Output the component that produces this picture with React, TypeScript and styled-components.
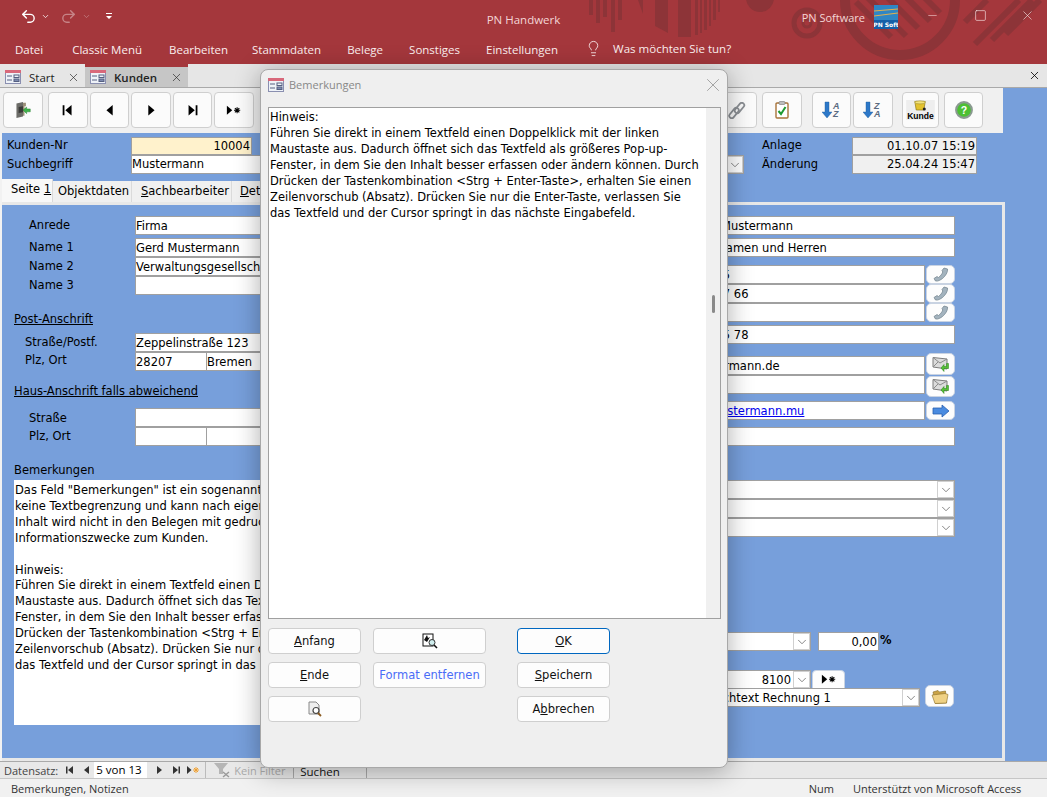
import React from "react";
import styled, { createGlobalStyle } from "styled-components";
import { Undo2, Redo2, ChevronDown, Lightbulb, X, Minus, Square } from "lucide-react";

const FORM_FONT = `"DejaVu Sans", Verdana, sans-serif`;
const UI_FONT = `"Open Sans", "Noto Sans", sans-serif`;

const Global = createGlobalStyle`
  html, body { margin: 0; padding: 0; height: 100%; overflow: hidden; background: #f0f0f0; }
  #root { height: 100%; }
  * { box-sizing: border-box; }
`;

const Page = styled.div`
  position: relative;
  width: 1047px;
  height: 797px;
  display: flex;
  flex-direction: column;
  overflow: hidden;
  font-family: ${FORM_FONT};
  font-size: 11.5px;
  color: #000;
`;

const Ribbon = styled.header`
  position: relative;
  height: 64px;
  flex: none;
  background: #a4373c;
  color: #fff;
  font-family: ${UI_FONT};
  overflow: hidden;
`;
const Decor = styled.svg`
  position: absolute;
  left: 0;
  top: 0;
`;
const TitleRow = styled.div`
  position: relative;
  height: 38px;
  display: grid;
  grid-template-columns: 1fr auto 1fr;
  align-items: center;
`;
const Qat = styled.div`
  display: flex;
  align-items: center;
  padding: 0 0 6px 20px;
`;
const QatBtn = styled.span<{ $w: number; $dim?: boolean }>`
  width: ${(p) => p.$w}px;
  display: flex;
  align-items: center;
  opacity: ${(p) => (p.$dim ? 0.38 : 1)};
`;
const AppTitle = styled.div`
  font-size: 11.5px;
  color: #f3d6d6;
  padding-top: 1px;
`;
const WinGroup = styled.div`
  display: flex;
  align-items: center;
  justify-content: flex-end;
  padding-bottom: 6px;
`;
const Owner = styled.span`
  font-size: 11px;
  color: #f3d6d6;
  margin: 2px 9px 0 0;
`;
const LogoWrap = styled.span`
  display: flex;
  margin-top: 2px;
`;
const WinBtn = styled.span<{ $ml: number }>`
  display: flex;
  margin-left: ${(p) => p.$ml}px;
  padding-bottom: 2px;
  color: #f8e4e4;
`;
const MenuRow = styled.nav`
  position: relative;
  height: 26px;
  display: flex;
  align-items: center;
  padding: 0 0 3px 15px;
  font-size: 11.5px;
`;
const MenuItem = styled.span<{ $ml: number }>`
  margin-left: ${(p) => p.$ml}px;
  color: #fbeeee;
`;
const TellMe = styled.span`
  display: flex;
  align-items: center;
  gap: 11px;
  margin-left: 27px;
  color: #fbeeee;
  margin-top: -2px;
`;

const TabStrip = styled.div`
  height: 24px;
  flex: none;
  display: flex;
  background: #e6e6e6;
  border-bottom: 1px solid #a9a9a9;
  font-family: ${UI_FONT};
  font-size: 11.5px;
`;
const DocTab = styled.div<{ $active?: boolean; $w: number }>`
  width: ${(p) => p.$w}px;
  display: flex;
  align-items: center;
  background: ${(p) => (p.$active ? "#c6c6c6" : "transparent")};
  border-top: 3px solid ${(p) => (p.$active ? "#a4373c" : "transparent")};
  padding: 0 5px 0 5px;
  font-weight: ${(p) => (p.$active ? 600 : 400)};
  color: #222;
  flex: none;
`;
const DocTabLabel = styled.span`
  margin-left: 8px;
  flex: 1;
`;
const StripClose = styled.span`
  margin-left: auto;
  display: flex;
  align-items: center;
  padding-right: 6px;
`;

const Toolbar = styled.div`
  height: 45px;
  flex: none;
  display: flex;
  align-items: flex-start;
  padding: 4px 20px 0 3px;
  background: #f0f0f0;
  position: relative;
`;
const ToolbarWrap = styled.div`
  flex: none;
  background: #779fdb;
  padding-right: 44px;
`;
const ToolButton = styled.div<{ $w: number; $ml: number }>`
  width: ${(p) => p.$w}px;
  height: 36px;
  margin-left: ${(p) => p.$ml}px;
  flex: none;
  display: flex;
  align-items: center;
  justify-content: center;
  background: #fbfbfb;
  border: 1px solid #cfcfcf;
  border-radius: 4px;
`;
const ToolSpacer = styled.div`
  flex: 1;
`;

const Workspace = styled.main`
  flex: 1;
  min-height: 0;
  display: flex;
  flex-direction: column;
  background: #779fdb;
  border-left: 2px solid #f2f2f2;
`;
const HeaderForm = styled.div`
  height: 46px;
  flex: none;
  display: flex;
  padding: 4px 0 0 5px;
`;
const HeaderLeft = styled.div`
  width: 755px;
`;
const HeaderRight = styled.div`
  width: 215px;
`;
const HeaderRow = styled.div<{ $h: number }>`
  display: flex;
  height: ${(p) => p.$h}px;
  align-items: stretch;
`;
const HeaderLabel = styled.div<{ $w: number; $pt: number }>`
  width: ${(p) => p.$w}px;
  flex: none;
  line-height: 15px;
  padding-top: ${(p) => p.$pt}px;
`;
const Box = styled.div<{
  $bg?: string;
  $right?: boolean;
  $w?: number;
  $indent?: number;
  $noLeft?: boolean;
  $ml?: number;
  $pr?: number;
}>`
  position: relative;
  ${(p) => (p.$w ? `width:${p.$w}px;flex:none;` : "flex:1;min-width:0;")}
  margin-left: ${(p) => p.$ml ?? 0}px;
  background: ${(p) => p.$bg ?? "#fff"};
  border: 1px solid #a0a0a0;
  ${(p) => (p.$noLeft ? "border-left:0;" : "")}
  line-height: 18px;
  padding: 0 ${(p) => p.$pr ?? 1}px 0 ${(p) => p.$indent ?? 0}px;
  text-align: ${(p) => (p.$right ? "right" : "left")};
  white-space: nowrap;
  overflow: hidden;
`;
const HeaderBox = styled(Box)`
  line-height: 16px;
`;
const Chevron = styled.span<{ $w?: number }>`
  position: absolute;
  right: 0;
  top: 0;
  bottom: 0;
  width: ${(p) => p.$w ?? 17}px;
  background: #fff;
  border: 1px solid #d0d0d0;
  display: flex;
  align-items: center;
  justify-content: center;
  color: #555;
`;

const TabBar = styled.div`
  height: 23px;
  flex: none;
  display: flex;
  align-items: flex-end;
`;
const FormTab = styled.div<{ $w: number; $active?: boolean; $pad?: number }>`
  width: ${(p) => p.$w}px;
  height: ${(p) => (p.$active ? 23 : 21)}px;
  background: ${(p) => (p.$active ? "#f8f8f8" : "#f0f0f0")};
  border-right: 1px solid #dadada;
  padding: 3px 0 0 ${(p) => p.$pad ?? 5}px;
  line-height: 15px;
  white-space: nowrap;
  overflow: hidden;
  flex: none;
`;
const TabPanel = styled.section`
  flex: 1;
  min-height: 0;
  margin-right: 42px;
  border: 3px solid #e8e8e8;
  border-left: 0;
  display: flex;
  padding-left: 12px;
  overflow: hidden;
`;
const LeftCol = styled.div`
  width: 466px;
  flex: none;
`;
const RightCol = styled.div`
  width: 315px;
  margin-left: 160px;
  flex: none;
`;
const Row = styled.div<{ $mt?: number; $h?: number }>`
  display: flex;
  align-items: stretch;
  margin-top: ${(p) => p.$mt ?? 0}px;
  height: ${(p) => p.$h ?? 19}px;
`;
const FieldLabel = styled.div<{ $indent: number; $pt?: number }>`
  width: 121px;
  flex: none;
  padding-left: ${(p) => p.$indent}px;
  padding-top: ${(p) => p.$pt ?? 1}px;
  line-height: 16px;
`;
const Heading = styled.div<{ $mt: number; $u?: boolean }>`
  height: 16px;
  line-height: 18px;
  margin-top: ${(p) => p.$mt}px;
  text-decoration: ${(p) => (p.$u ? "underline" : "none")};
`;
const NoteBox = styled.div`
  margin-top: 3px;
  height: 245px;
  background: #fff;
  padding: 3px 0 0 1px;
  line-height: 15.9px;
  white-space: pre;
  overflow: hidden;
`;
const IconBtn = styled.div<{ $w?: number; $ml?: number; $top?: boolean; $mt?: number; $mb?: number }>`
  width: ${(p) => p.$w ?? 29}px;
  margin: ${(p) => p.$mt ?? 0}px 0 ${(p) => p.$mb ?? 0}px ${(p) => p.$ml ?? 1}px;
  flex: none;
  background: #fdfdfd;
  border: 1px solid #c9d3e2;
  border-radius: ${(p) => (p.$top ? "4px 4px 0 0" : "5px")};
  display: flex;
  align-items: center;
  justify-content: center;
`;
const Percent = styled.span`
  margin-left: 1px;
  font-weight: 700;
  line-height: 16px;
`;
const LinkText = styled.span`
  color: #0000ee;
  text-decoration: underline;
`;

const NavBar = styled.div`
  height: 17px;
  flex: none;
  display: flex;
  align-items: center;
  background: #e8e8e8;
  border-top: 1px solid #a9a9a9;
  font-family: ${UI_FONT};
  font-size: 11px;
  padding-left: 4px;
  color: #444;
`;
const NavIcon = styled.span<{ $ml: number }>`
  margin-left: ${(p) => p.$ml}px;
  display: flex;
`;
const NavInput = styled.span`
  width: 53px;
  height: 16px;
  margin-left: 1px;
  background: #fff;
  color: #000;
  padding-left: 2px;
  font-size: 11.5px;
  line-height: 16px;
  flex: none;
`;
const FilterCell = styled.span`
  margin-left: 6px;
  width: 88px;
  padding-left: 7px;
  height: 100%;
  display: flex;
  align-items: center;
  gap: 1px;
  border-left: 1px solid #bbb;
  color: #aaa;
  flex: none;
  white-space: nowrap;
`;
const SearchCell = styled.span`
  width: 74px;
  height: 100%;
  padding-left: 6px;
  border-left: 1px solid #a9a9a9;
  border-right: 1px solid #a9a9a9;
  color: #111;
  font-size: 11.5px;
  flex: none;
  line-height: 19px;
  overflow: hidden;
`;
const StatusBar = styled.footer`
  height: 19px;
  flex: none;
  display: flex;
  align-items: center;
  background: #f1f1f1;
  border-top: 1px solid #c6c6c6;
  padding: 0 0 0 11px;
  font-family: ${UI_FONT};
  font-size: 11px;
  color: #333;
`;
const StatusRight = styled.span<{ $ml: number }>`
  margin-left: ${(p) => p.$ml}px;
`;

const Dialog = styled.div`
  position: absolute;
  left: 260px;
  top: 69px;
  width: 468px;
  height: 699px;
  background: #efefef;
  border: 1px solid #a8a8a8;
  border-radius: 8px;
  box-shadow: 0 3px 26px rgba(0, 0, 0, 0.32);
  display: flex;
  flex-direction: column;
  padding: 0 6px 0 7px;
`;
const DialogTitle = styled.div`
  height: 37px;
  flex: none;
  display: flex;
  align-items: center;
  gap: 5px;
  padding: 0 0 8px 0;
  font-family: ${UI_FONT};
  font-size: 11px;
  color: #888;
`;
const DialogClose = styled.span`
  margin-left: auto;
  margin-right: -3px;
  display: flex;
  color: #888;
`;
const TextArea = styled.div`
  position: relative;
  height: 512px;
  flex: none;
  background: #fff;
  border: 1px solid #a0a0a0;
  padding: 1px 16px 0 1px;
  line-height: 16px;
`;
const Track = styled.span`
  position: absolute;
  right: 0;
  top: 0;
  bottom: 0;
  width: 14px;
  background: #f0f0f0;
`;
const Thumb = styled.span`
  position: absolute;
  right: 5px;
  top: 187px;
  width: 3px;
  height: 18px;
  border-radius: 2px;
  background: #8a8a8a;
`;
const DialogButtons = styled.div`
  margin-top: 9px;
  display: grid;
  grid-template-columns: 93px 113px 93px;
  grid-auto-rows: 26px;
  column-gap: 12px;
  row-gap: 8px;
`;
const DButton = styled.div<{ $col: number; $primary?: boolean; $blue?: boolean }>`
  grid-column: ${(p) => p.$col};
  ${(p) => (p.$col === 3 ? "margin-left:19px;width:93px;" : "")}
  background: #fdfdfd;
  border: 1px solid ${(p) => (p.$primary ? "#0067c0" : "#cfcfcf")};
  border-radius: 4px;
  display: flex;
  align-items: center;
  justify-content: center;
  color: ${(p) => (p.$blue ? "#4a6cf7" : "#111")};
`;

const DialogBody = styled.div`
  white-space: pre-wrap;
`;

const FormIcon = () => (
  <svg width="16" height="16" viewBox="0 0 16 16">
    <rect x="0.5" y="1.5" width="15" height="13" fill="#eef2f8" stroke="#8a8fb0" />
    <rect x="0" y="1" width="16" height="3" fill="#d8687a" />
    <path d="M2 7h5M2 11h5" stroke="#555f80" strokeWidth="1" />
    <rect x="9" y="6" width="5" height="2.5" fill="none" stroke="#555f80" />
    <rect x="9" y="10" width="5" height="2.5" fill="#7d8bb0" stroke="#555f80" />
  </svg>
);
const Glyph = ({ kind }: { kind: "first" | "prev" | "next" | "last" | "new" }) => (
  <svg width="16" height="12.5" viewBox="0 0 18 14">
    {kind === "first" && <path d="M3 1.5h2v11H3zM13 1v12L6 7z" fill="#000" />}
    {kind === "prev" && <path d="M12 1v12L5 7z" fill="#000" />}
    {kind === "next" && <path d="M6 1v12l7-6z" fill="#000" />}
    {kind === "last" && <path d="M4 1v12l7-6zM12 1.5h2v11h-2z" fill="#000" />}
    {kind === "new" && (
      <>
        <path d="M1 2v10l6-5z" fill="#000" />
        <path d="M9 7h7M12.5 3.5v7M10 4.5l5 5M15 4.5l-5 5" stroke="#000" strokeWidth="1.2" />
      </>
    )}
  </svg>
);
const ExitIcon = () => (
  <svg width="16" height="18" viewBox="0 0 22 24">
    <path d="M2 3l9-2v20l-9 2z" fill="#6c6c68" />
    <path d="M11 2h4v5h-2v13h-2z" fill="#9a8f78" />
    <path d="M5 8l6-1v8l-6 1z" fill="#3a3a38" />
    <path d="M11 12l5-4v2.5h5v4h-5V17z" fill="#3fb34a" stroke="#207a2b" strokeWidth=".6" />
  </svg>
);
const ClipIcon = () => (
  <svg width="18" height="17" viewBox="0 0 18 17">
    <g fill="none" stroke="#8b8f94" strokeWidth="1.8">
      <rect x="-6" y="-2.4" width="12" height="4.8" rx="2.4" transform="translate(6 11) rotate(-50)" />
      <rect x="-6" y="-2.4" width="12" height="4.8" rx="2.4" transform="translate(11.5 6) rotate(-50)" />
    </g>
  </svg>
);
const ClipboardIcon = () => (
  <svg width="14" height="18" viewBox="0 0 14 18">
    <rect x="1" y="2" width="12" height="15" rx="1" fill="#fff" stroke="#a8743a" strokeWidth="1.4" />
    <rect x="4" y="0.5" width="6" height="3" rx="1" fill="#bdbdbd" stroke="#777" strokeWidth=".6" />
    <path d="M3.5 10l2.5 3 4.5-7" fill="none" stroke="#1f9a32" strokeWidth="2" />
  </svg>
);
const SortIcon = ({ top, bottom }: { top: string; bottom: string }) => (
  <svg width="20" height="18" viewBox="0 0 20 18">
    <path d="M3 1h4v10h3l-5 6-5-6h3z" fill="#2d78c8" stroke="#1a5aa0" strokeWidth=".4" />
    <text x="11" y="8" fontFamily="Liberation Sans, sans-serif" fontSize="9" fontWeight="700" fontStyle="italic" fill="#5a6a80">{top}</text>
    <text x="11" y="15.5" fontFamily="Liberation Sans, sans-serif" fontSize="9" fontWeight="700" fontStyle="italic" fill="#5a6a80">{bottom}</text>
  </svg>
);
const KundeIcon = () => (
  <svg width="29" height="20" viewBox="0 0 30 21">
    <rect width="30" height="21" fill="#eeeeee" />
    <path d="M9 1.5h11l-1.5 9h-8z" fill="#e3c22e" stroke="#8a7410" strokeWidth=".7" />
    <ellipse cx="14.5" cy="2.5" rx="5.5" ry="1.6" fill="#f2e27a" stroke="#8a7410" strokeWidth=".5" />
    <circle cx="19" cy="9.5" r="1.6" fill="#222" />
    <text x="15" y="19.5" textAnchor="middle" fontFamily="Liberation Sans, sans-serif" fontSize="9" fontWeight="700" fill="#000">Kunde</text>
  </svg>
);
const HelpIcon = () => (
  <svg width="18" height="18" viewBox="0 0 24 24">
    <circle cx="12" cy="12" r="10.5" fill="#4cc033" stroke="#8a9a90" strokeWidth="2.8" />
    <text x="12" y="17" textAnchor="middle" fontFamily="Liberation Sans, sans-serif" fontSize="14" fontWeight="700" fill="#fff">?</text>
  </svg>
);
const PhoneIcon = () => (
  <svg width="16" height="15" viewBox="0 0 16 15">
    <path
      d="M11 1l3.500 1c.5 3-2 7-5 9.500C7.500 13 5 14.500 2.500 14L1 11.500l3-2 1.500 1C7.500 9 9 7 9.800 5L9 3.500z"
      fill="#a3b3be"
      stroke="#6f7f8a"
      strokeWidth=".7"
    />
  </svg>
);
const MailIcon = () => (
  <svg width="18" height="17" viewBox="0 0 18 17">
    <path d="M1 1.5l14 1.5v10L1 11z" fill="#dcdcdc" stroke="#7c7c7c" />
    <path d="M1 1.5l7 5.500 7-4M1 11l5-5" fill="none" stroke="#8c8c8c" />
    <path d="M9 12l3-3.500v2h2.500V7.500h2v5h-4.500v3z" fill="#55c136" stroke="#2a7e1a" strokeWidth=".5" />
  </svg>
);
const ArrowIcon = () => (
  <svg width="18" height="14" viewBox="0 0 18 14">
    <path d="M1 4h9V1l7 6-7 6v-3H1z" fill="#4a8be0" stroke="#2a5fae" strokeWidth=".8" />
  </svg>
);
const FolderIcon = () => (
  <svg width="18" height="15" viewBox="0 0 18 15">
    <path d="M2 3l5-1.500 1.500 1.500 6-1 1 12-11 .5z" fill="#c9a347" stroke="#8a6d26" strokeWidth=".6" />
    <path d="M1 6l13-1.500 3 1L15.500 14 4 14.500z" fill="#efd184" stroke="#8a6d26" strokeWidth=".6" />
  </svg>
);
const LensPage = () => (
  <svg width="16" height="16" viewBox="0 0 16 16">
    <path d="M2 1h7l3 3v9H2z" fill="#eee" stroke="#888" />
    <circle cx="9" cy="9.5" r="3" fill="#fff" stroke="#444" strokeWidth="1.2" />
    <path d="M11 12l3 3" stroke="#8a5a20" strokeWidth="1.8" />
  </svg>
);
const ZoomBlack = () => (
  <svg width="16" height="16" viewBox="0 0 16 16">
    <rect x="1" y="1" width="10" height="12" fill="#fff" stroke="#111" />
    <path d="M2 7l3-5 1 3 2-1-3 5z" fill="#111" />
    <circle cx="10" cy="9.5" r="3" fill="#cfeeee" stroke="#333" />
    <path d="M12 12l3 3" stroke="#111" strokeWidth="1.6" />
  </svg>
);
const Logo = () => (
  <svg width="24" height="24" viewBox="0 0 24 24">
    <rect width="24" height="24" fill="#1660a8" />
    <rect width="24" height="15" fill="#2f86c4" />
    <path d="M0 6l24-2M0 11l24-3" stroke="#e0b050" strokeWidth="1.2" />
    <text x="12" y="22" textAnchor="middle" fontFamily="DejaVu Sans, sans-serif" fontSize="6" fontWeight="700" fill="#fff">PN Soft</text>
  </svg>
);
const TinyNav = ({ kind }: { kind: "first" | "prev" | "next" | "last" | "new" }) => (
  <svg width="12" height="10" viewBox="0 0 12 10">
    {kind === "first" && <path d="M2 1.5h1.500v7H2zM9 1v8L4 5z" fill="#333" />}
    {kind === "prev" && <path d="M8 1v8L3 5z" fill="#333" />}
    {kind === "next" && <path d="M4 1v8l5-4z" fill="#333" />}
    {kind === "last" && <path d="M3 1v8l5-4zM8.5 1.5H10v7H8.500z" fill="#333" />}
    {kind === "new" && (
      <>
        <path d="M0 1v8l4.500-4z" fill="#333" />
        <path d="M6 5h6M9 2v6M7 3l4 4M11 3L7 7" stroke="#f0a030" strokeWidth="1" />
      </>
    )}
  </svg>
);
const FilterIcon = () => (
  <svg width="20" height="16" viewBox="0 0 20 16">
    <path d="M1 1h14l-5 6v5H6V7z" fill="#b5b5b5" />
    <path d="M10 10l6 5M16 10l-6 5" stroke="#999" strokeWidth="1.4" />
  </svg>
);
const DownChevron = () => <ChevronDown size={14} strokeWidth={1.2} />;
const TinyChevron = () => <ChevronDown size={9} strokeWidth={2} />;

const Decoration = () => (
  <Decor width="1047" height="64" viewBox="0 0 1047 64">
    <g fill="#8d3438">
      <rect x="589" y="0" width="4" height="15" />
      <rect x="596" y="0" width="4" height="23" />
      <rect x="603" y="0" width="4" height="17" />
      <rect x="611" y="0" width="4" height="32" />
      <rect x="618" y="0" width="4" height="20" />
      <path d="M638 0h5v14zM655 0h13v33l-13-7z" />
      <rect x="678" y="0" width="13" height="37" />
      <rect x="695" y="0" width="3" height="35" />
      <rect x="700" y="0" width="2" height="33" />
      <rect x="704" y="0" width="3" height="30" />
      <rect x="709" y="0" width="2" height="26" />
      <rect x="713" y="0" width="3" height="20" />
      <rect x="718" y="0" width="2" height="12" />
      <circle cx="760" cy="-2" r="14" />
    </g>
    <g fill="none" stroke="#8d3438">
      <circle cx="807" cy="23" r="13" strokeWidth="5" />
      <circle cx="807" cy="23" r="4" strokeWidth="3" />
      <circle cx="900" cy="0" r="55" strokeWidth="10" />
      <path d="M856 2l35 35M868 -2l38 38M888 -2l30 30M905 -4l25 25M925 -2l15 15" strokeWidth="6" />
      <path d="M975 44l44-44M992 40l40-40M965 22l22-22M1006 34l34-34" strokeWidth="6" />
    </g>
  </Decor>
);

const noteText = `Das Feld "Bemerkungen" ist ein sogenanntes Memofeld. Es hat
keine Textbegrenzung und kann nach eigenen Wünschen gefüllt
Inhalt wird nicht in den Belegen mit gedruckt und dient nur
Informationszwecke zum Kunden.

Hinweis:
Führen Sie direkt in einem Textfeld einen Doppelklick mit der linken
Maustaste aus. Dadurch öffnet sich das Textfeld als größeres Pop-up-
Fenster, in dem Sie den Inhalt besser erfassen oder ändern können.
Drücken der Tastenkombination <Strg + Enter-Taste>, erhalten Sie einen
Zeilenvorschub (Absatz). Drücken Sie nur die Enter-Taste, verlassen Sie
das Textfeld und der Cursor springt in das nächste Eingabefeld.`;

const dialogText = `Hinweis:
Führen Sie direkt in einem Textfeld einen Doppelklick mit der linken Maustaste aus. Dadurch öffnet sich das Textfeld als größeres Pop-up-Fenster, in dem Sie den Inhalt besser erfassen oder ändern können. Durch Drücken der Tastenkombination <Strg + Enter-Taste>, erhalten Sie einen Zeilenvorschub (Absatz). Drücken Sie nur die Enter-Taste, verlassen Sie das Textfeld und der Cursor springt in das nächste Eingabefeld.`;

export default function App() {
  return (
    <Page>
      <Global />
      <Ribbon>
        <Decoration />
        <TitleRow>
          <Qat>
            <QatBtn $w={21}><Undo2 size={17} strokeWidth={2} /></QatBtn>
            <QatBtn $w={19}><TinyChevron /></QatBtn>
            <QatBtn $w={22} $dim><Redo2 size={17} strokeWidth={2} /></QatBtn>
            <QatBtn $w={23} $dim><TinyChevron /></QatBtn>
            <QatBtn $w={10}>
              <svg width="8" height="8" viewBox="0 0 8 8"><path d="M1 1h6v1H1zM1 4h6L4 7z" fill="#fff" /></svg>
            </QatBtn>
          </Qat>
          <AppTitle>PN Handwerk</AppTitle>
          <WinGroup>
            <Owner>PN Software</Owner>
            <LogoWrap><Logo /></LogoWrap>
            <WinBtn $ml={28}><Minus size={13} strokeWidth={1} /></WinBtn>
            <WinBtn $ml={35}><Square size={13} strokeWidth={1.2} /></WinBtn>
            <WinBtn $ml={33}><X size={15} strokeWidth={1} /></WinBtn>
            <WinBtn $ml={12} />
          </WinGroup>
        </TitleRow>
        <MenuRow>
          <MenuItem $ml={0}>Datei</MenuItem>
          <MenuItem $ml={29}>Classic Menü</MenuItem>
          <MenuItem $ml={27}>Bearbeiten</MenuItem>
          <MenuItem $ml={24}>Stammdaten</MenuItem>
          <MenuItem $ml={26}>Belege</MenuItem>
          <MenuItem $ml={26}>Sonstiges</MenuItem>
          <MenuItem $ml={26}>Einstellungen</MenuItem>
          <TellMe><Lightbulb size={17} strokeWidth={1.2} />Was möchten Sie tun?</TellMe>
        </MenuRow>
      </Ribbon>
      <TabStrip>
        <DocTab $w={85}>
          <FormIcon />
          <DocTabLabel>Start</DocTabLabel>
          <X size={13} strokeWidth={1.2} />
        </DocTab>
        <DocTab $w={103} $active>
          <FormIcon />
          <DocTabLabel>Kunden</DocTabLabel>
          <X size={13} strokeWidth={1.2} />
        </DocTab>
        <StripClose><X size={13} strokeWidth={1.5} /></StripClose>
      </TabStrip>
      <ToolbarWrap>
        <Toolbar>
          <ToolButton $w={40} $ml={0}><ExitIcon /></ToolButton>
          <ToolButton $w={40} $ml={5}><Glyph kind="first" /></ToolButton>
          <ToolButton $w={39} $ml={2}><Glyph kind="prev" /></ToolButton>
          <ToolButton $w={40} $ml={2}><Glyph kind="next" /></ToolButton>
          <ToolButton $w={39} $ml={2}><Glyph kind="last" /></ToolButton>
          <ToolButton $w={40} $ml={2}><Glyph kind="new" /></ToolButton>
          <ToolSpacer />
          <ToolButton $w={40} $ml={0}><ClipIcon /></ToolButton>
          <ToolButton $w={40} $ml={5}><ClipboardIcon /></ToolButton>
          <ToolButton $w={39} $ml={10}><SortIcon top="A" bottom="Z" /></ToolButton>
          <ToolButton $w={40} $ml={2}><SortIcon top="Z" bottom="A" /></ToolButton>
          <ToolButton $w={37} $ml={9}><KundeIcon /></ToolButton>
          <ToolButton $w={39} $ml={5}><HelpIcon /></ToolButton>
        </Toolbar>
      </ToolbarWrap>
      <Workspace>
        <HeaderForm>
          <HeaderLeft>
            <HeaderRow $h={18}>
              <HeaderLabel $w={124} $pt={1}>Kunden-Nr</HeaderLabel>
              <HeaderBox $w={121} $bg="#fff2cc" $right>10004</HeaderBox>
            </HeaderRow>
            <HeaderRow $h={19}>
              <HeaderLabel $w={124} $pt={2}>Suchbegriff</HeaderLabel>
              <HeaderBox $w={613}>Mustermann<Chevron><DownChevron /></Chevron></HeaderBox>
            </HeaderRow>
          </HeaderLeft>
          <HeaderRight>
            <HeaderRow $h={18}>
              <HeaderLabel $w={90} $pt={1}>Anlage</HeaderLabel>
              <HeaderBox $w={125} $bg="#f0f0f0" $right>01.10.07 15:19</HeaderBox>
            </HeaderRow>
            <HeaderRow $h={19}>
              <HeaderLabel $w={90} $pt={2}>Änderung</HeaderLabel>
              <HeaderBox $w={125} $bg="#f0f0f0" $right>25.04.24 15:47</HeaderBox>
            </HeaderRow>
          </HeaderRight>
        </HeaderForm>
        <TabBar>
          <FormTab $w={51} $active $pad={9}>Seite <u>1</u></FormTab>
          <FormTab $w={79}>Objektdaten</FormTab>
          <FormTab $w={100} $pad={9}><u>S</u>achbearbeiter</FormTab>
          <FormTab $w={80} $pad={8}><u>D</u>etails</FormTab>
        </TabBar>
        <TabPanel>
          <LeftCol>
            <Row $mt={11}><FieldLabel $indent={15}>Anrede</FieldLabel><Box>Firma</Box></Row>
            <Row $mt={3}><FieldLabel $indent={15}>Name 1</FieldLabel><Box>Gerd Mustermann</Box></Row>
            <Row><FieldLabel $indent={15}>Name 2</FieldLabel><Box>Verwaltungsgesellschaft</Box></Row>
            <Row><FieldLabel $indent={15}>Name 3</FieldLabel><Box /></Row>
            <Heading $mt={15} $u>Post-Anschrift</Heading>
            <Row $mt={7}><FieldLabel $indent={11}>Straße/Postf.</FieldLabel><Box>Zeppelinstraße 123</Box></Row>
            <Row>
              <FieldLabel $indent={11} $pt={0}>Plz, Ort</FieldLabel>
              <Box $w={72}>28207</Box>
              <Box $noLeft>Bremen</Box>
            </Row>
            <Heading $mt={11} $u>Haus-Anschrift falls abweichend</Heading>
            <Row $mt={10}><FieldLabel $indent={15} $pt={2}>Straße</FieldLabel><Box /></Row>
            <Row><FieldLabel $indent={15}>Plz, Ort</FieldLabel><Box $w={72} /><Box $noLeft /></Row>
            <Heading $mt={15}>Bemerkungen</Heading>
            <NoteBox>{noteText}</NoteBox>
          </LeftCol>
          <RightCol>
            <Row $mt={11}><Box $indent={80}>Mustermann</Box></Row>
            <Row $mt={3}><Box $indent={76}>Damen und Herren</Box></Row>
            <Row $mt={8}><Box $indent={16}>0421 123 45</Box><IconBtn><PhoneIcon /></IconBtn></Row>
            <Row><Box $indent={16}>0421 123 47 66</Box><IconBtn><PhoneIcon /></IconBtn></Row>
            <Row><Box /><IconBtn><PhoneIcon /></IconBtn></Row>
            <Row $mt={3}><Box $indent={16}>0421 123 45 78</Box></Row>
            <Row $mt={12}><Box $indent={14}>info@mustermann.de</Box><IconBtn $mt={-3}><MailIcon /></IconBtn></Row>
            <Row><Box /><IconBtn $mt={1} $mb={-3}><MailIcon /></IconBtn></Row>
            <Row $mt={7}><Box $indent={37}><LinkText>www.mustermann.mu</LinkText></Box><IconBtn><ArrowIcon /></IconBtn></Row>
            <Row $mt={7}><Box /></Row>
            <Row $mt={34}><Box><Chevron><DownChevron /></Chevron></Box></Row>
            <Row><Box><Chevron><DownChevron /></Chevron></Box></Row>
            <Row><Box><Chevron><DownChevron /></Chevron></Box></Row>
            <Row $mt={95}>
              <Box $w={171}><Chevron><DownChevron /></Chevron></Box>
              <Box $w={61} $right $ml={7}>0,00</Box>
              <Percent>%</Percent>
            </Row>
            <Row $mt={19}>
              <Box $w={171} $right $pr={19}>8100<Chevron><DownChevron /></Chevron></Box>
              <IconBtn $w={33} $top><Glyph kind="new" /></IconBtn>
            </Row>
            <Row $mt={-1}>
              <Box $w={280} $indent={66}>Nachtext Rechnung 1<Chevron><DownChevron /></Chevron></Box>
              <IconBtn $ml={5} $mt={-3}><FolderIcon /></IconBtn>
            </Row>
          </RightCol>
        </TabPanel>
      </Workspace>
      <NavBar>
        Datensatz:
        <NavIcon $ml={6}><TinyNav kind="first" /></NavIcon>
        <NavIcon $ml={5}><TinyNav kind="prev" /></NavIcon>
        <NavInput>5 von 13</NavInput>
        <NavIcon $ml={6}><TinyNav kind="next" /></NavIcon>
        <NavIcon $ml={5}><TinyNav kind="last" /></NavIcon>
        <NavIcon $ml={5}><TinyNav kind="new" /></NavIcon>
        <FilterCell><FilterIcon />Kein Filter</FilterCell>
        <SearchCell>Suchen</SearchCell>
      </NavBar>
      <StatusBar>
        Bemerkungen, Notizen
        <StatusRight $ml={680}>Num</StatusRight>
        <StatusRight $ml={19}>Unterstützt von Microsoft Access</StatusRight>
      </StatusBar>
      <Dialog>
        <DialogTitle>
          <FormIcon />
          Bemerkungen
          <DialogClose><X size={22} strokeWidth={0.8} /></DialogClose>
        </DialogTitle>
        <TextArea>
          <DialogBody>{dialogText}</DialogBody>
          <Track><Thumb /></Track>
        </TextArea>
        <DialogButtons>
          <DButton $col={1}><span><u>A</u>nfang</span></DButton>
          <DButton $col={2}><ZoomBlack /></DButton>
          <DButton $col={3} $primary><span><u>O</u>K</span></DButton>
          <DButton $col={1}><span><u>E</u>nde</span></DButton>
          <DButton $col={2} $blue>Format entfernen</DButton>
          <DButton $col={3}><span><u>S</u>peichern</span></DButton>
          <DButton $col={1}><LensPage /></DButton>
          <DButton $col={3}><span>A<u>b</u>brechen</span></DButton>
        </DialogButtons>
      </Dialog>
    </Page>
  );
}
